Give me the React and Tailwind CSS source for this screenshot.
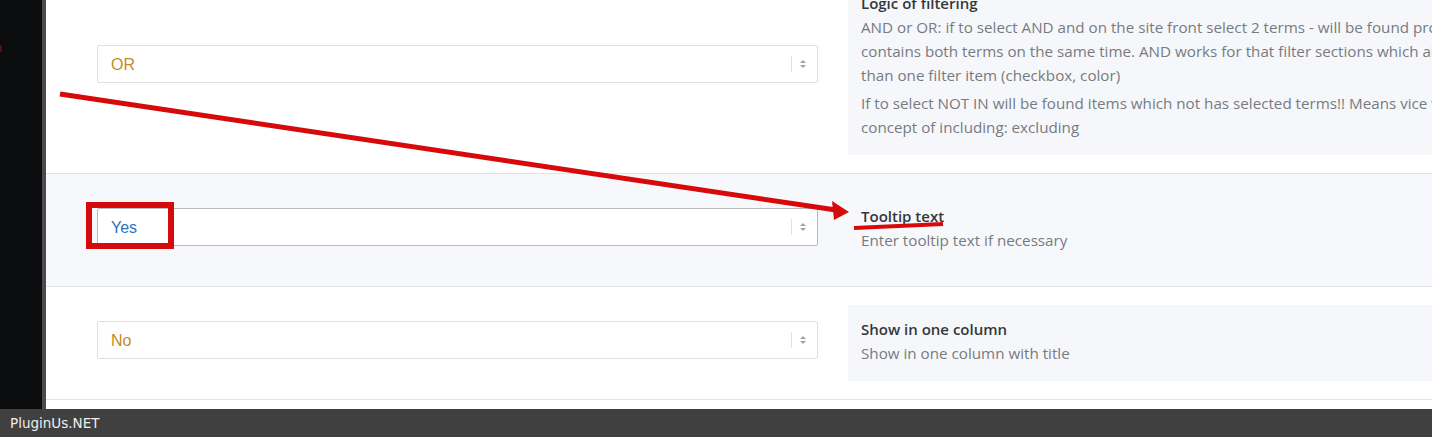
import React from "react";

const descFont = { fontFamily: "'Open Sans', 'Noto Sans', sans-serif" };

// Fake select like the one in the plugin settings
const Select = ({ value, color, focused }) => (
  <div
    className={`mb-[6px] flex h-[38px] w-[721px] shrink-0 items-center rounded-[2px] border bg-white pl-[13px] pr-[10px] ${
      focused ? "border-[#b5bac3]" : "border-[#dedede]"
    }`}
  >
    <span
      className={`flex-1 pt-[2px] text-[16px] ${color}`}
      style={{ fontFamily: "'Liberation Sans', Arial, sans-serif" }}
    >
      {value}
    </span>
    <span className="h-[16px] w-px bg-[#e1e1e1]" />
    <span className="ml-[7px] flex w-[8px] flex-col items-center gap-[2px]">
      <span className="h-0 w-0 border-x-[3px] border-b-[3px] border-x-transparent border-b-[#a3a3a3]" />
      <span className="h-0 w-0 border-x-[3px] border-t-[3px] border-x-transparent border-t-[#a3a3a3]" />
    </span>
  </div>
);

const Desc = ({ title, children, boxed = true }) => (
  <div
    className={`w-[700px] shrink-0 pl-[13px] pt-[12px] pb-[16px] ${boxed ? "bg-[#f6f7fb]" : ""}`}
    style={descFont}
  >
    <div className="text-[15px] font-semibold leading-[24px] text-[#32373c]">{title}</div>
    {children}
  </div>
);

const Row = ({ children, className = "" }) => (
  <div className={`flex items-center gap-[30px] border-b border-[#e2e2e2] py-[18px] pl-[51px] ${className}`}>
    {children}
  </div>
);

const P = ({ lines, className = "" }) => (
  <p className={`whitespace-nowrap text-[15.2px] leading-[24px] text-[#777b80] ${className}`}>
    {lines.map((l, i) => (
      <span key={i} className="block">
        {l}
      </span>
    ))}
  </p>
);

export default function App() {
  return (
    <div className="relative flex h-[437px] w-[1432px] flex-col overflow-hidden bg-white">
      <div className="flex min-h-0 flex-1">
        <div className="w-[42px] shrink-0 bg-[#0b0c0e]" />
        <div className="w-[4px] shrink-0 bg-[#4b4b4b]" />
        <main className="min-w-0 flex-1 overflow-hidden">
          <Row className="-mt-[39px] bg-white">
            <Select value="OR" color="text-[#c58a24]" />
            <Desc title="Logic of filtering">
              <P
                lines={[
                  "AND or OR: if to select AND and on the site front select 2 terms - will be found products which",
                  "contains both terms on the same time. AND works for that filter sections which allow to select more",
                  "than one filter item (checkbox, color)",
                ]}
              />
              <P
                className="mt-[4px]"
                lines={[
                  "If to select NOT IN will be found items which not has selected terms!! Means vice versa to the",
                  "concept of including: excluding",
                ]}
              />
            </Desc>
          </Row>
          <Row className="bg-[#f7f8fb]">
            <Select value="Yes" color="text-[#2c72b9]" focused />
            <Desc title="Tooltip text" boxed={false}>
              <P lines={["Enter tooltip text if necessary"]} />
            </Desc>
          </Row>
          <Row className="bg-white">
            <Select value="No" color="text-[#c58a24]" />
            <Desc title="Show in one column">
              <P lines={["Show in one column with title"]} />
            </Desc>
          </Row>
        </main>
      </div>

      <footer
        className="flex h-[28px] shrink-0 items-center bg-[#404040] pl-[10px] text-[13.5px] text-[#eeeeee]"
        style={{ fontFamily: "'DejaVu Sans', sans-serif" }}
      >
        PluginUs.NET
      </footer>

      {/* red annotation overlay */}
      <svg className="pointer-events-none absolute left-0 top-0" width="1432" height="437">
        <rect x="0" y="45" width="2" height="7" fill="#5a0b0b" />
        <line x1="60" y1="94" x2="836" y2="210" stroke="#d60a0a" strokeWidth="5" />
        <polygon points="832,201 849,212 834,220" fill="#d60a0a" />
        <rect x="89" y="205" width="82" height="41" fill="none" stroke="#d60a0a" strokeWidth="6" />
        <line x1="854" y1="228" x2="943" y2="224" stroke="#d60a0a" strokeWidth="4" />
      </svg>
    </div>
  );
}
